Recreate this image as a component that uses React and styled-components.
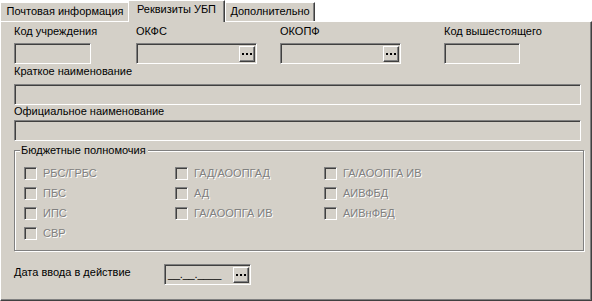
import React from 'react';
import styled, { createGlobalStyle } from 'styled-components';

const face = '#d4d0c8';
const shadow = '#808080';
const darkShadow = '#404040';

const GlobalStyle = createGlobalStyle`
  html, body {
    margin: 0;
    padding: 0;
    background: #fff;
  }
  body {
    font-family: "Liberation Sans", Arial, sans-serif;
    font-size: 11px;
    color: #000;
  }
`;

const Window = styled.div`
  width: 592px;
  height: 301px;
  overflow: hidden;
`;

const TabBar = styled.div`
  display: flex;
  align-items: flex-end;
  height: 21px;
`;

const Tab = styled.div`
  position: relative;
  box-sizing: border-box;
  display: flex;
  justify-content: center;
  width: ${({ $width }) => $width}px;
  height: ${({ $active }) => ($active ? 22 : 19)}px;
  margin: ${({ $active }) => ($active ? '0 0 -1px -2px' : '0')};
  padding-top: 2px;
  line-height: 13px;
  white-space: nowrap;
  background: ${face};
  border-top: 1px solid #fff;
  border-left: 1px solid #fff;
  border-right: 1px solid ${darkShadow};
  box-shadow: inset -1px 0 0 ${shadow};
  z-index: ${({ $active }) => ($active ? 2 : 0)};
`;

const Panel = styled.div`
  position: relative;
  z-index: 1;
  box-sizing: border-box;
  width: 592px;
  height: 280px;
  overflow: hidden;
  padding: 3px 10px 0 13px;
  background: ${face};
  border-top: 1px solid #fff;
  border-left: 1px solid #fff;
  border-right: 1px solid ${darkShadow};
  border-bottom: 1px solid ${darkShadow};
  box-shadow: inset -1px -1px 0 ${shadow};
`;

const TopRow = styled.div`
  display: grid;
  grid-template-columns: 122px 144px 164px 1fr;
`;

const Field = styled.div`
  display: flex;
  flex-direction: column;
  gap: ${({ $gap }) => $gap}px;
  margin-top: ${({ $top = 0 }) => $top}px;
`;

const Label = styled.div`
  height: 13px;
  line-height: 13px;
  white-space: nowrap;
`;

const Sunken = styled.div`
  box-sizing: border-box;
  display: flex;
  align-items: stretch;
  justify-content: space-between;
  width: ${({ $width }) => ($width ? `${$width}px` : '100%')};
  height: 21px;
  padding: 2px 1px 1px 2px;
  background: ${face};
  border-top: 1px solid ${shadow};
  border-left: 1px solid ${shadow};
  border-bottom: 1px solid #fff;
  border-right: 1px solid #fff;
  box-shadow: inset 1px 1px 0 ${darkShadow};
`;

const Mask = styled.span`
  padding-left: 1px;
  line-height: 15px;
  letter-spacing: -0.2px;
`;

const DotButton = styled.div`
  box-sizing: border-box;
  display: flex;
  align-items: center;
  justify-content: center;
  gap: 2px;
  width: 16px;
  margin-left: auto;
  background: ${face};
  border-top: 1px solid #fff;
  border-left: 1px solid #fff;
  border-right: 1px solid ${darkShadow};
  border-bottom: 1px solid ${darkShadow};
  box-shadow: inset -1px -1px 0 ${shadow};
`;

const Dot = styled.span`
  width: 2px;
  height: 2px;
  background: #000;
`;

const Group = styled.fieldset`
  box-sizing: border-box;
  min-width: 0;
  width: 570px;
  margin: 3px 0 0 0;
  padding: 10px 0 3px 9px;
  border: 1px solid ${shadow};
  box-shadow: inset 1px 1px 0 #fff, 1px 1px 0 #fff;
`;

const Legend = styled.legend`
  margin-left: -4px;
  padding: 0 2px 0 1px;
  line-height: 13px;
  background: ${face};
`;

const Columns = styled.div`
  display: grid;
  grid-template-columns: 151px 149px 1fr;
`;

const Column = styled.div`
  display: flex;
  flex-direction: column;
`;

const CheckRow = styled.label`
  display: flex;
  align-items: flex-start;
  gap: 6px;
  height: 20px;
  line-height: 13px;
  color: ${shadow};
  text-shadow: 1px 1px 0 #fff;
  white-space: nowrap;
`;

const Box = styled.span`
  box-sizing: border-box;
  flex: none;
  width: 13px;
  height: 13px;
  background: ${face};
  border-top: 1px solid ${shadow};
  border-left: 1px solid ${shadow};
  border-bottom: 1px solid #fff;
  border-right: 1px solid #fff;
  box-shadow: inset 1px 1px 0 ${darkShadow};
`;

const DateRow = styled.div`
  display: flex;
  align-items: flex-start;
  margin-top: 13px;
`;

const DateLabel = styled(Label)`
  width: 150px;
  margin-top: 2px;
`;

const Lookup = ({ width }) => (
  <Sunken $width={width}>
    <DotButton>
      <Dot />
      <Dot />
      <Dot />
    </DotButton>
  </Sunken>
);

const Check = ({ children }) => (
  <CheckRow>
    <Box />
    {children}
  </CheckRow>
);

const columns = [
  ['РБС/ГРБС', 'ПБС', 'ИПС', 'СВР'],
  ['ГАД/АООПГАД', 'АД', 'ГА/АООПГА ИВ'],
  ['ГА/АООПГА ИВ', 'АИВФБД', 'АИВнФБД'],
];

const App = () => (
  <Window>
    <GlobalStyle />
    <TabBar>
      <Tab $width={130}>Почтовая информация</Tab>
      <Tab $width={97} $active>
        Реквизиты УБП
      </Tab>
      <Tab $width={90}>Дополнительно</Tab>
    </TabBar>
    <Panel>
      <TopRow>
        <Field $gap={5}>
          <Label>Код учреждения</Label>
          <Sunken $width={77} />
        </Field>
        <Field $gap={5}>
          <Label>ОКФС</Label>
          <Lookup width={121} />
        </Field>
        <Field $gap={5}>
          <Label>ОКОПФ</Label>
          <Lookup width={121} />
        </Field>
        <Field $gap={5}>
          <Label>Код вышестоящего</Label>
          <Sunken $width={76} />
        </Field>
      </TopRow>
      <Field $gap={6} $top={1}>
        <Label>Краткое наименование</Label>
        <Sunken />
      </Field>
      <Field $gap={2}>
        <Label>Официальное наименование</Label>
        <Sunken />
      </Field>
      <Group>
        <Legend>Бюджетные полномочия</Legend>
        <Columns>
          {columns.map((items, i) => (
            <Column key={i}>
              {items.map((item) => (
                <Check key={item}>{item}</Check>
              ))}
            </Column>
          ))}
        </Columns>
      </Group>
      <DateRow>
        <DateLabel>Дата ввода в действие</DateLabel>
        <Sunken $width={87}>
          <Mask>__.__.____</Mask>
          <DotButton>
            <Dot />
            <Dot />
            <Dot />
          </DotButton>
        </Sunken>
      </DateRow>
    </Panel>
  </Window>
);

export default App;
